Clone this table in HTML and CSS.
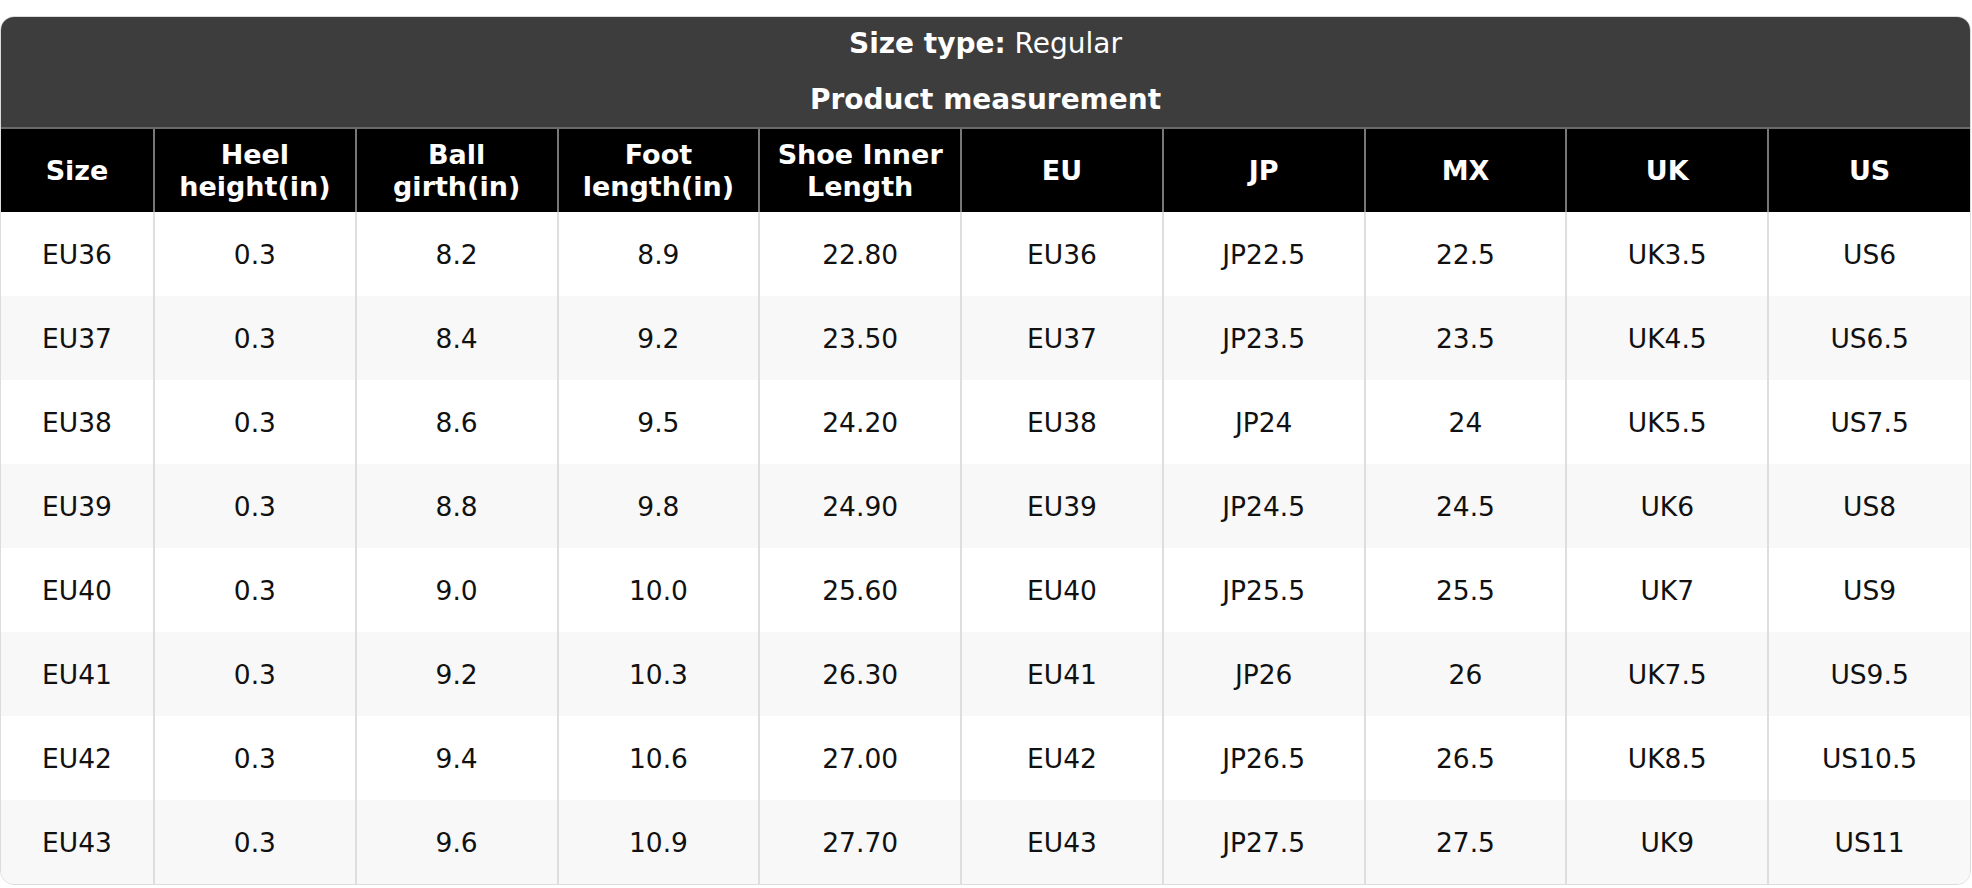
FILE: index.html
```html
<!DOCTYPE html>
<html lang="en">
<head>
<meta charset="utf-8">
<title>Size chart</title>
<link rel="stylesheet" href="styles.css">
</head>
<body>
<div class="page">
  <div class="card">
    <div class="title">
      <div class="title-line"><b>Size type:</b> Regular</div>
      <div class="title-line"><b>Product measurement</b></div>
    </div>
    <table class="chart">
      <colgroup>
        <col class="c-first">
        <col><col><col><col><col><col><col><col><col>
      </colgroup>
      <thead>
        <tr>
          <th>Size</th>
          <th>Heel<br>height(in)</th>
          <th>Ball<br>girth(in)</th>
          <th>Foot<br>length(in)</th>
          <th>Shoe Inner<br>Length</th>
          <th>EU</th>
          <th>JP</th>
          <th>MX</th>
          <th>UK</th>
          <th>US</th>
        </tr>
      </thead>
      <tbody>
        <tr><td>EU36</td><td>0.3</td><td>8.2</td><td>8.9</td><td>22.80</td><td>EU36</td><td>JP22.5</td><td>22.5</td><td>UK3.5</td><td>US6</td></tr>
        <tr><td>EU37</td><td>0.3</td><td>8.4</td><td>9.2</td><td>23.50</td><td>EU37</td><td>JP23.5</td><td>23.5</td><td>UK4.5</td><td>US6.5</td></tr>
        <tr><td>EU38</td><td>0.3</td><td>8.6</td><td>9.5</td><td>24.20</td><td>EU38</td><td>JP24</td><td>24</td><td>UK5.5</td><td>US7.5</td></tr>
        <tr><td>EU39</td><td>0.3</td><td>8.8</td><td>9.8</td><td>24.90</td><td>EU39</td><td>JP24.5</td><td>24.5</td><td>UK6</td><td>US8</td></tr>
        <tr><td>EU40</td><td>0.3</td><td>9.0</td><td>10.0</td><td>25.60</td><td>EU40</td><td>JP25.5</td><td>25.5</td><td>UK7</td><td>US9</td></tr>
        <tr><td>EU41</td><td>0.3</td><td>9.2</td><td>10.3</td><td>26.30</td><td>EU41</td><td>JP26</td><td>26</td><td>UK7.5</td><td>US9.5</td></tr>
        <tr><td>EU42</td><td>0.3</td><td>9.4</td><td>10.6</td><td>27.00</td><td>EU42</td><td>JP26.5</td><td>26.5</td><td>UK8.5</td><td>US10.5</td></tr>
        <tr><td>EU43</td><td>0.3</td><td>9.6</td><td>10.9</td><td>27.70</td><td>EU43</td><td>JP27.5</td><td>27.5</td><td>UK9</td><td>US11</td></tr>
      </tbody>
    </table>
  </div>
</div>
</body>
</html>
```
FILE: styles.css
```css
html, body {
  margin: 0;
  padding: 0;
  background: #ffffff;
}

body {
  font-family: "DejaVu Sans", "Liberation Sans", sans-serif;
  color: #111111;
}

.page {
  padding: 16px 1px 0 0;
}

.card {
  border: 1px solid #dcdcdc;
  border-radius: 14px;
  overflow: hidden;
  background: #ffffff;
}

.title {
  background: #3d3d3d;
  color: #ffffff;
  text-align: center;
  font-size: 28px;
  line-height: 34px;
  padding: 10px 0 10px;
  display: flex;
  flex-direction: column;
  gap: 22px;
}

.title-line b {
  font-weight: bold;
}

.chart {
  width: 100%;
  border-collapse: collapse;
  table-layout: fixed;
}

.c-first {
  width: 153px;
}

.chart th {
  background: #000000;
  color: #ffffff;
  font-weight: bold;
  font-size: 27px;
  line-height: 32px;
  height: 83px;
  padding: 0 4px;
  text-align: center;
  vertical-align: middle;
  border-top: 2px solid #6a6a6a;
  border-left: 2px solid #777777;
}

.chart th:first-child,
.chart td:first-child {
  border-left: none;
}

.chart td {
  font-size: 26.5px;
  height: 84px;
  padding: 0 4px;
  text-align: center;
  vertical-align: middle;
  border-left: 2px solid #dedede;
}

.chart tbody tr:nth-child(even) td {
  background: #f8f8f8;
}
```
